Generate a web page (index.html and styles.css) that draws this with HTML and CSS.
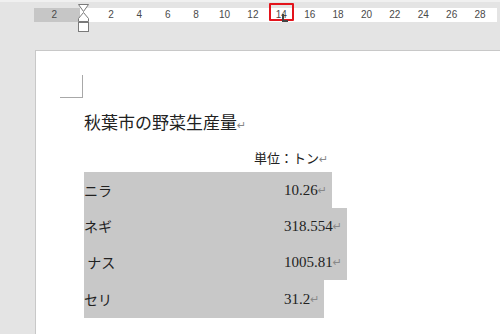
FILE: index.html
```html
<!DOCTYPE html>
<html lang="ja">
<head>
    <meta charset="UTF-8" />
    <meta name="viewport" content="width=device-width, initial-scale=1.0" />
    <title>野菜生産量</title>
    <link rel="stylesheet" href="styles.css">
</head>
<body>
    <div class="topline"></div>
    <div class="ruler">
        <svg class="indent" width="12" height="30" viewBox="0 0 12 30">
            <path d="M0.5 0.5 H10.5 L5.5 7.5 Z" fill="#fff" stroke="#7a7a7a" />
            <path d="M5.5 8.5 L10.5 14.5 V17.5 H0.5 V14.5 Z" fill="#fff" stroke="#7a7a7a" />
            <rect x="0.5" y="18.5" width="10" height="9" fill="#fff" stroke="#7a7a7a" />
        </svg>
        <span class="tick">2</span>
        <span class="tick"></span>
        <span class="tick">2</span>
        <span class="tick">4</span>
        <span class="tick">6</span>
        <span class="tick">8</span>
        <span class="tick">10</span>
        <span class="tick">12</span>
        <span class="tick tick-tab">14<span class="tab-box"></span><span class="tab-stop"></span></span>
        <span class="tick">16</span>
        <span class="tick">18</span>
        <span class="tick">20</span>
        <span class="tick">22</span>
        <span class="tick">24</span>
        <span class="tick">26</span>
        <span class="tick">28</span>
    </div>

    <div class="page">
        <div class="corner"></div>
        <p class="title">秋葉市の野菜生産量<span class="ret">↵</span></p>
        <p class="unit">単位：トン<span class="ret">↵</span></p>
        <div class="table">
            <div class="row row-1"><span class="name">ニラ</span><span class="num">10.26</span><span class="ret">↵</span></div>
            <div class="row row-2"><span class="name">ネギ</span><span class="num">318.554</span><span class="ret">↵</span></div>
            <div class="row row-3"><span class="name">&nbsp;ナス</span><span class="num">1005.81</span><span class="ret">↵</span></div>
            <div class="row row-4"><span class="name">セリ</span><span class="num">31.2</span><span class="ret">↵</span></div>
        </div>
    </div>
</body>
</html>
```

FILE: styles.css
```css
body{
    margin: 0;
    background: #e4e4e4;
    font-family: "Liberation Serif", "Noto Sans CJK JP", serif;
    color: #222;
    overflow: hidden;
}

.topline{
    height: 2px;
    background: #f0f0f0;
}

.ruler{
    position: relative;
    display: flex;
    margin: 6px 0 0 34px;
    width: 463px;
    height: 14px;
    padding-left: 6px;
    box-sizing: border-box;
    background: linear-gradient(to right, #c6c6c6 0, #c6c6c6 46px, #fff 46px);
    font-family: "Liberation Sans", sans-serif;
    font-size: 10px;
    line-height: 14px;
    color: #4a4a4a;
}

.tick{
    position: relative;
    flex: 0 0 28.4px;
    text-align: center;
}

.indent{
    position: absolute;
    left: 44px;
    top: -4px;
}

.tab-box{
    position: absolute;
    left: 2px;
    right: 2px;
    top: -5px;
    bottom: 1px;
    border: 2px solid #e3141c;
    border-radius: 1px;
}

.tab-stop{
    position: absolute;
    left: 15px;
    top: 6px;
    width: 6px;
    height: 8px;
    border-left: 2px solid #444;
    border-bottom: 2px solid #444;
    box-sizing: border-box;
}

.page{
    margin: 28px 0 0 35px;
    padding-left: 48px;
    height: calc(100vh - 51px);
    overflow: hidden;
    background: #fff;
    border-top: 1px solid #c8c8c8;
    border-left: 1px solid #c8c8c8;
}

.corner{
    width: 23px;
    height: 23px;
    margin: 24px 0 0 -24px;
    border-right: 1px solid #a8a8a8;
    border-bottom: 1px solid #a8a8a8;
    box-sizing: border-box;
}

.title{
    margin: 12px 0 0;
    font-family: "Noto Sans CJK JP", sans-serif;
    font-size: 17px;
    line-height: 24px;
}

.unit{
    margin: 10px 0 0 170px;
    font-family: "Noto Sans CJK JP", sans-serif;
    font-size: 13px;
    line-height: 20px;
}

.ret{
    font-family: "DejaVu Sans", sans-serif;
    font-size: 11px;
    color: #888;
    display: inline-block;
    width: 12px;
}

.table{
    margin-top: 2px;
}

.row{
    display: flex;
    align-items: center;
    width: fit-content;
    height: 36px;
    padding-right: 2px;
    background: #c8c8c8;
}

.row-4{
    height: 38px;
}

.name{
    width: 200px;
    font-family: "Noto Sans CJK JP", sans-serif;
    font-size: 14px;
}

.num{
    font-size: 15px;
}
```
